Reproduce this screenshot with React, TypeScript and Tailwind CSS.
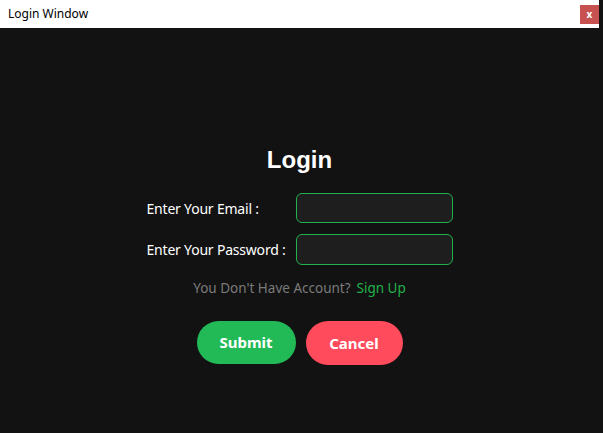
import React from 'react';

const App: React.FC = () => {
  return (
    <div className="w-[603px] h-[433px] bg-[#121212] flex flex-col font-['Noto_Sans',sans-serif] overflow-hidden">
      <div className="h-[28px] w-[599px] bg-white flex items-center justify-between pl-2">
        <span className="text-[12px] text-black">Login Window</span>
        <div className="w-[19px] h-[19px] bg-[#c75050] text-white text-[10px] font-bold flex items-center justify-center leading-none">
          x
        </div>
      </div>

      <div className="flex-1 w-[599px] flex flex-col items-center pt-[120px]">
        <h1 className="text-[24px] leading-[24px] font-bold text-white font-['Liberation_Sans',sans-serif]">
          Login
        </h1>

        <div className="mt-[21px] grid grid-cols-[149px_157px] gap-y-[11px] items-center">
          <label className="text-[14px] tracking-[-0.2px] whitespace-nowrap text-white">Enter Your Email :</label>
          <input className="h-[30px] rounded-[6px] border border-[#22b14c] bg-[#1e1e1e] outline-none" />
          <label className="text-[14px] tracking-[-0.2px] whitespace-nowrap text-white">Enter Your Password :</label>
          <input
            type="password"
            className="h-[31px] rounded-[6px] border border-[#22b14c] bg-[#1e1e1e] outline-none"
          />
        </div>

        <p className="mt-[13px] text-[13.5px] leading-[20px] text-[#7a7a7a]">
          You Don't Have Account?
          <span className="ml-[6px] text-[#22b14c]">Sign Up</span>
        </p>

        <div className="mt-[23px] flex gap-[10px]">
          <button className="w-[99px] h-[43px] rounded-full bg-[#21ba57] text-white text-[15px] font-bold">
            Submit
          </button>
          <button className="w-[97px] h-[44px] rounded-full bg-[#ff4b5c] text-white text-[15px] font-bold">
            Cancel
          </button>
        </div>
      </div>
    </div>
  );
};

export default App;
